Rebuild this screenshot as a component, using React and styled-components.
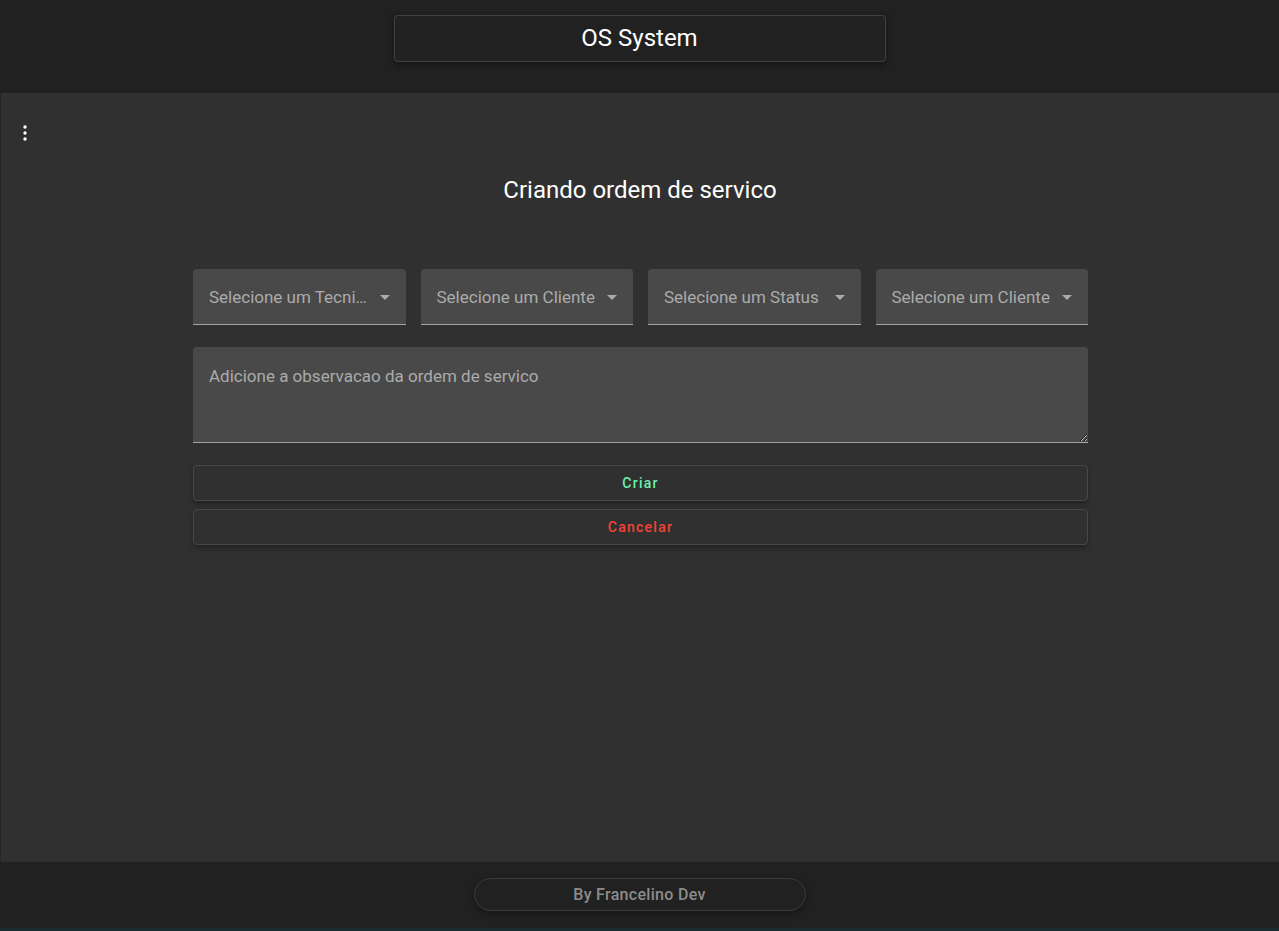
import React from "react";
import styled, { createGlobalStyle } from "styled-components";

const Global = createGlobalStyle`
  html, body { margin: 0; padding: 0; background: #1c2a31; }
  body { font-family: Roboto, "Liberation Sans", sans-serif; }
  * { box-sizing: border-box; }
`;

const Page = styled.div`
  display: flex;
  flex-direction: column;
  height: 928px;
  background: #212121;
`;

const Header = styled.header`
  height: 93px;
  display: flex;
  justify-content: center;
  align-items: flex-start;
  padding-top: 15px;
  background: #212121;
`;

const TitleBox = styled.div`
  width: 492px;
  height: 47px;
  border: 1px solid #414141;
  border-radius: 4px;
  background: #212121;
  box-shadow: 0 3px 6px rgba(0, 0, 0, 0.35);
  display: flex;
  align-items: center;
  justify-content: center;
  color: #ffffff;
  font-size: 24px;
  font-weight: 400;
  padding-bottom: 2px;
`;

const Main = styled.main`
  flex: 1;
  background: #303030;
  border-left: 1px solid #262626;
  display: flex;
  flex-direction: column;
  padding-top: 28px;
`;

const MenuButton = styled.button`
  width: 24px;
  height: 24px;
  margin-left: 12px;
  padding: 0;
  border: none;
  background: transparent;
  color: #ffffff;
  display: flex;
  align-items: center;
  justify-content: center;
  cursor: pointer;
`;

const Heading = styled.h2`
  margin: 29px 0 0;
  text-align: center;
  color: #ffffff;
  font-size: 24px;
  font-weight: 400;
  line-height: 32px;
`;

const Form = styled.div`
  width: 895px;
  margin: 63px auto 0 192px;
  display: flex;
  flex-direction: column;
`;

const SelectRow = styled.div`
  display: grid;
  grid-template-columns: repeat(4, minmax(0, 1fr));
  column-gap: 15px;
`;

const SelectBox = styled.div`
  height: 56px;
  background: #494949;
  border-radius: 4px 4px 0 0;
  border-bottom: 1px solid #a3a3a3;
  display: flex;
  align-items: center;
  padding: 0 9px 0 16px;
  color: #ababab;
  font-size: 17px;
  font-weight: 400;
`;

const SelectText = styled.span`
  flex: 1;
  min-width: 0;
  white-space: nowrap;
  overflow: hidden;
  text-overflow: ellipsis;
  padding-top: 1px;
`;

const Caret = styled.svg`
  width: 24px;
  height: 24px;
  flex: none;
  fill: #ababab;
`;

const TextArea = styled.textarea`
  margin-top: 22px;
  height: 96px;
  background: #494949;
  border: none;
  border-bottom: 1px solid #a3a3a3;
  border-radius: 4px 4px 0 0;
  padding: 19px 16px;
  color: #ffffff;
  font-family: Roboto, "Liberation Sans", sans-serif;
  font-size: 17px;
  font-weight: 400;
  resize: vertical;
  outline: none;
  &::placeholder { color: #ababab; opacity: 1; }
`;

const ActionButton = styled.button`
  margin-top: ${(p) => p.$mt}px;
  height: 36px;
  width: 100%;
  background: #303030;
  border: 1px solid #474747;
  border-radius: 4px;
  box-shadow: 0 3px 5px rgba(0, 0, 0, 0.3);
  color: ${(p) => p.$color};
  font-family: Roboto, "Liberation Sans", sans-serif;
  font-size: 14px;
  font-weight: 500;
  letter-spacing: 1.25px;
  cursor: pointer;
`;

const Footer = styled.footer`
  height: 66px;
  background: #212121;
  display: flex;
  justify-content: center;
  padding-top: 16px;
`;

const Pill = styled.div`
  width: 332px;
  height: 33px;
  border: 1px solid #3b3b3b;
  border-radius: 17px;
  box-shadow: 0 3px 6px rgba(0, 0, 0, 0.3);
  display: flex;
  align-items: center;
  justify-content: center;
  color: #8c8c8c;
  font-size: 16px;
  font-weight: 500;
  letter-spacing: 0.3px;
`;

const selects = [
  "Selecione um Tecnico",
  "Selecione um Cliente",
  "Selecione um Status",
  "Selecione um Cliente",
];

export default function App() {
  return (
    <>
      <Global />
      <Page>
        <Header>
          <TitleBox>OS System</TitleBox>
        </Header>
        <Main>
          <MenuButton aria-label="menu">
            <svg width="24" height="24" viewBox="0 0 24 24" fill="currentColor">
              <circle cx="12" cy="6" r="1.7" />
              <circle cx="12" cy="12" r="1.7" />
              <circle cx="12" cy="18" r="1.7" />
            </svg>
          </MenuButton>
          <Heading>Criando ordem de servico</Heading>
          <Form>
            <SelectRow>
              {selects.map((s, i) => (
                <SelectBox key={i}>
                  <SelectText>{s}</SelectText>
                  <Caret viewBox="0 0 24 24">
                    <path d="M7 10l5 5 5-5z" />
                  </Caret>
                </SelectBox>
              ))}
            </SelectRow>
            <TextArea placeholder="Adicione a observacao da ordem de servico" />
            <ActionButton $mt={22} $color="#69f0ae">Criar</ActionButton>
            <ActionButton $mt={8} $color="#f44336">Cancelar</ActionButton>
          </Form>
        </Main>
        <Footer>
          <Pill>By Francelino Dev</Pill>
        </Footer>
      </Page>
    </>
  );
}
